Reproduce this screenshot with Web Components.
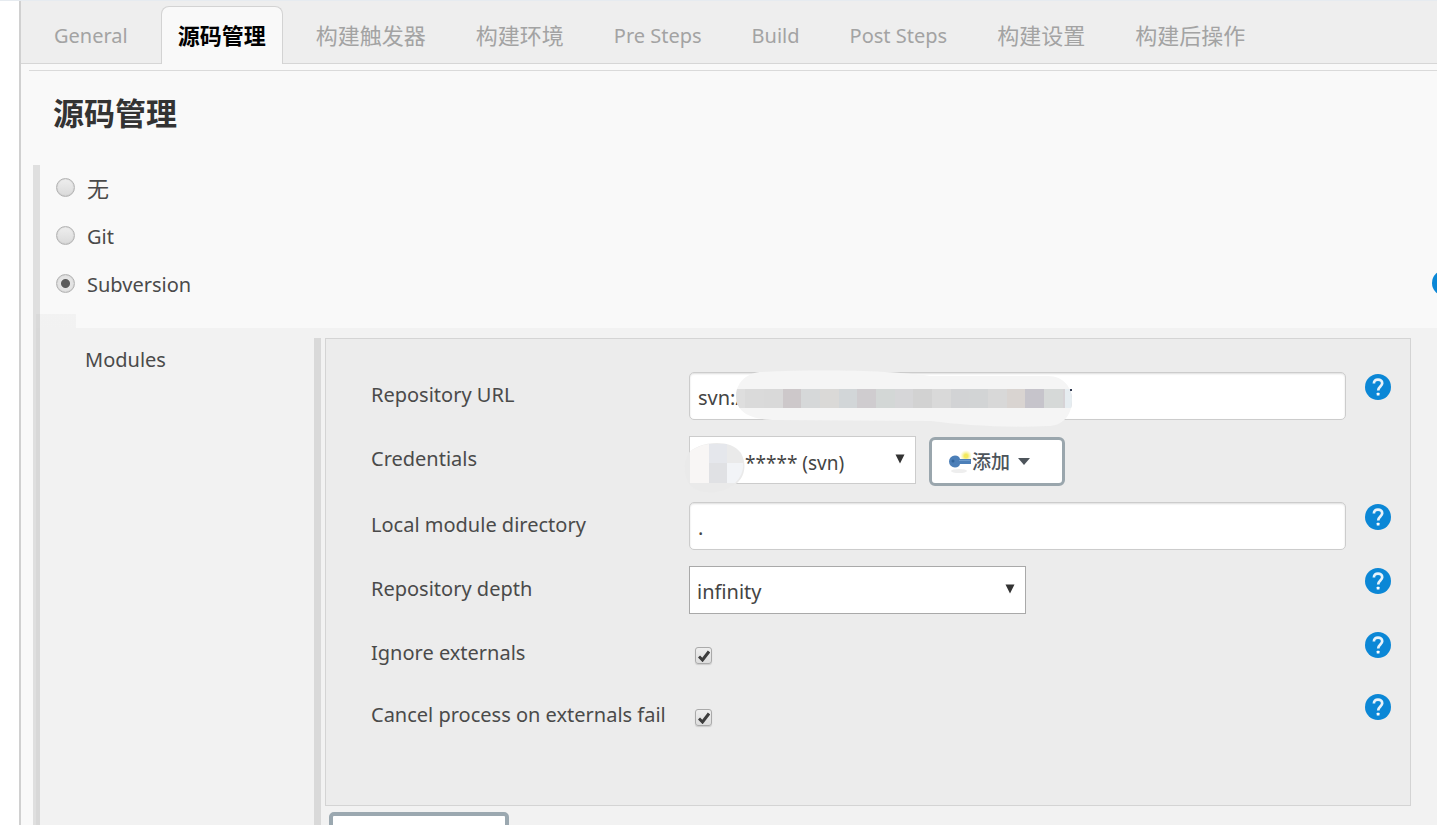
<!DOCTYPE html>
<html lang="zh-CN">
<head>
<meta charset="utf-8">
<title>源码管理</title>
<style>
  html, body { margin: 0; height: 100%; }
  body {
    overflow: hidden;
    background: #fff;
    color: #4a4a4a;
    font: 20px/28px "Noto Sans", "Noto Sans CJK SC", sans-serif;
  }
</style>
</head>
<body>
<config-page>
  <tab-strip slot="tabs"></tab-strip>
  <span slot="title">源码管理</span>
  <scm-options>
    <module-panel></module-panel>
  </scm-options>
</config-page>

<script>
class Base extends HTMLElement {
  constructor() {
    super();
    this.attachShadow({ mode: 'open' });
  }
  connectedCallback() {
    this.shadowRoot.innerHTML = '<style>*{box-sizing:border-box}</style>' + this.render();
  }
}

customElements.define('config-page', class extends Base {
  render() {
    return `<style>
      :host { display: block; height: 100vh; overflow: hidden; border-top: 1px solid #e6ebf0; }
      main { margin-left: 19px; border-left: 2px solid #d0d0d0; background: #f9f9f9; min-height: 100%; }
      hr { margin: 6px 0 0 8px; border: 0; border-top: 1px solid #dadada; }
      h2 { margin: 22px 0 32px 32px; font-size: 31px; line-height: 40px; font-weight: 700; color: #333; }
      .body { margin-left: 12px; }
    </style>
    <main>
      <slot name="tabs"></slot>
      <hr>
      <h2><slot name="title"></slot></h2>
      <div class="body"><slot></slot></div>
    </main>`;
  }
});

customElements.define('tab-strip', class extends Base {
  render() {
    const tabs = ['General', '源码管理', '构建触发器', '构建环境', 'Pre Steps', 'Build', 'Post Steps', '构建设置', '构建后操作'];
    const items = tabs.map((t, i) =>
      `<button role="tab" aria-selected="${i === 1}" class="${/^[A-Z]/.test(t) ? 'latin' : ''}">${t}</button>`).join('');
    return `<style>
      :host { display: block; }
      div { display: flex; gap: 18px; padding: 5px 17px 0; background: linear-gradient(#d6d6d6,#d6d6d6) bottom / 100% 1px no-repeat #eee; }
      button { flex: none; height: 58px; padding: 0 16px 2px; border: 1px solid transparent; border-bottom: 0; margin: 0 -1px;
        background: none; font: inherit; font-size: 22px; color: #a3a3a3; border-radius: 8px 8px 0 0; white-space: nowrap; }
      .latin { font-size: 20px; padding-bottom: 0; }
      [aria-selected=true] { background: #f9f9f9; border-color: #d3d3d3; color: #000; font-weight: 700; }
    </style><div role="tablist">${items}</div>`;
  }
});

customElements.define('help-icon', class extends Base {
  render() {
    return `<style>
      :host { display: block; width: 26px; height: 26px; flex: none; }
      button { display: block; width: 26px; height: 26px; padding: 0; border: 0; background: none; }
      svg { display: block; }
    </style>
    <button aria-label="Help"><svg width="26" height="26" viewBox="0 0 26 26">
      <circle cx="13" cy="13" r="13" fill="#0b87d6"/>
      <path d="M8.9 9.6C8.9 6.8 10.6 5.600 13 5.600s4.200 1.500 4.200 3.600c0 3.100-4 3.400-4 7.200" fill="none" stroke="#fff" stroke-opacity=".9" stroke-width="2.700"/>
      <rect x="11.700" y="18.700" width="2.800" height="2.800" rx=".6" fill="#fff"/>
    </svg></button>`;
  }
});

customElements.define('scm-options', class extends Base {
  render() {
    const row = (id, text, on, extra = '') => `<div class="row">
      <input type="radio" name="scm" id="${id}" ${on ? 'checked' : ''}><label for="${id}">${text}</label>${extra}</div>`;
    return `<style>
      :host { display: block; border-left: 7px solid #dfdfdf; }
      .row { display: flex; align-items: center; height: 48px; padding-left: 16px; margin-right: -21px; }
      input { appearance: none; flex: none; width: 19px; height: 19px; margin: 0 12px 4px 0; border: 1px solid #b4b4b4; border-radius: 50%;
        background: linear-gradient(#eee, #dadada); box-shadow: inset 0 0 1px #aaa; }
      input:checked { background: radial-gradient(circle, #5c5c5c 0 4px, #e4e4e4 5px); }
      label { flex: 1; }
      .wide { font-size: 22px; }
      help-icon { margin-bottom: 4px; }
      .nested { margin: 5px 0 0 -4px; --tint: rgba(0,0,0,.027); }
      .notch { height: 14px; background: linear-gradient(var(--tint), var(--tint)) left / 40px 100% no-repeat; }
      .content { background: var(--tint); }
    </style>
    ${row('none', '<span class="wide">无</span>')}
    ${row('git', 'Git')}
    ${row('svn', 'Subversion', true, '<help-icon></help-icon>')}
    <div class="nested"><div class="notch"></div><div class="content"><slot></slot></div></div>`;
  }
});

customElements.define('module-panel', class extends Base {
  render() {
    return `<style>
      :host { display: flex; padding: 10px 26px 0 49px; }
      h3 { flex: none; width: 229px; margin: 8px 0 0; font: inherit; }
      .list { flex: 1; min-width: 0; border-left: 7px solid #d9d9d9; padding: 0 0 40px 4px; }
      .box { display: grid; gap: 16px; border: 1px solid #d4d4d4; background: #ececec; padding: 33px 19px 67px 45px; }
      .add { display: block; width: 180px; height: 50px; margin: 6px 0 0 4px; border: 4px solid #9ba8b0; border-radius: 5px; background: #fff; }
    </style>
    <h3>Modules</h3>
    <div class="list">
      <div class="box">
        <field-row kind="url" label="Repository URL" help></field-row>
        <field-row kind="credentials" label="Credentials"></field-row>
        <field-row kind="directory" label="Local module directory" help></field-row>
        <field-row kind="depth" label="Repository depth" help></field-row>
        <field-row kind="check" label="Ignore externals" help></field-row>
        <field-row kind="check" label="Cancel process on externals fail" help></field-row>
      </div>
      <button class="add" aria-label="Add module"></button>
    </div>`;
  }
});

const arrow = '<svg class="arrow" width="10" height="10" viewBox="0 0 10 10"><path d="M.5 .5h9L5 9.5z" fill="#333"/></svg>';
const shades = ['#dedede', '#dadada', '#d9d9d9', '#cdc8ca', '#d6d8d9', '#dad9d7', '#d2d6d8', '#cfcccf', '#d3d7d6', '#d6d6d8', '#d2d2d2', '#d9d9d9', '#d2d3d5', '#d2d4d5', '#d8d8d8', '#d9d4d1', '#c6c4cb', '#d6d9d8', '#d6d3d6'];
const controls = {
  url: `<input id="c" type="text" value="svn:/">
    <svg class="mask" width="340" height="60" viewBox="0 0 340 60" aria-hidden="true">
      <defs><clipPath id="m"><path d="M26 2C90 -1 160 1 194 6L312 6C328 6 336 18 336 30C336 46 326 56 312 56C270 58 225 55 195 51L40 50C14 50 0 42 0 26C0 12 12 2 26 2z"/></clipPath></defs>
      <path d="M26 2C90 -1 160 1 194 6L312 6C328 6 336 18 336 30C336 46 326 56 312 56C270 58 225 55 195 51L40 50C14 50 0 42 0 26C0 12 12 2 26 2z" fill="#f5f5f5"/>
      <g clip-path="url(#m)">${shades.map((c, i) => `<rect x="${i * 18 - 9 + Math.floor(i * 2 / 3)}" y="19" width="19" height="19" fill="${c}"/>`).join('')}
        <rect x="329" y="19" width="9" height="19" fill="#e6edf1"/></g>
      <rect x="334" y="19" width="2" height="2" fill="#333b52"/>
    </svg>`,
  credentials: `<span class="select cred"><select id="c"><option>***** (svn)</option></select>${arrow}
      <svg class="blot" width="62" height="54" viewBox="0 0 62 54" aria-hidden="true">
        <path d="M4 14C12 2 46 -3 57 13C65 28 58 42 48 46C34 56 10 54 4 42C-1 32 0 22 4 14z" fill="#eaeaea"/>
        <path d="M6 11C12 8 17 5 25 4V43H6z" fill="#f8f6f5"/>
        <path d="M25 4h18v19H25z" fill="#e5e7ec"/><path d="M25 23h18v20H25z" fill="#e0e1e4"/><path d="M43 23h16C60 31 56 38 51 43h-8z" fill="#f2f4f7"/>
      </svg></span>
    <button class="key"><svg width="24" height="24" viewBox="0 0 24 24" aria-hidden="true">
      <defs><radialGradient id="g"><stop offset=".3" stop-color="#f2e95c"/><stop offset="1" stop-color="#f8f3a0" stop-opacity="0"/></radialGradient></defs>
      <ellipse cx="11" cy="21" rx="8" ry="2" fill="#eee"/>
      <circle cx="18" cy="6" r="6" fill="url(#g)"/>
      <path d="M7 5.500c3 0 4.500 1.500 5 3.500h11v5h-11c-.5 2-2 3.500-5 3.500a6 6 0 0 1 0-12z" fill="#4c7fb8"/>
      <path d="M11 10.500h11" stroke="#6c9acb"/><circle cx="5" cy="11" r="1.500" fill="#31659d"/>
    </svg><span>添加</span><svg class="caret" width="12" height="7" viewBox="0 0 12 7" aria-hidden="true"><path d="M0 0h12L6 7z" fill="#4d545b"/></svg></button>`,
  directory: `<input id="c" type="text" value=".">`,
  depth: `<span class="select depth"><select id="c"><option>infinity</option></select>${arrow}</span>`,
  check: `<input id="c" type="checkbox" checked><svg class="tick" width="12" height="12" viewBox="0 0 12 12" aria-hidden="true"><path d="M1 6.500L4.500 10L11 1.500" fill="none" stroke="#3d3d3d" stroke-width="3"/></svg>`
};

customElements.define('field-row', class extends Base {
  render() {
    const kind = this.getAttribute('kind');
    return `<style>
      :host { display: grid; grid-template-columns: 318px minmax(0, 1fr) 26px; min-height: 48px; align-items: start; }
      :host([kind=check]) { min-height: 46px; }
      label { line-height: 46px; white-space: nowrap; }
      .control { position: relative; display: flex; margin-right: 19px; }
      input[type=text] { width: 100%; height: 48px; padding: 2px 8px 0; border: 1px solid #ccc; border-radius: 5px;
        box-shadow: inset 0 1px 2px #ddd; background: #fff; font: inherit; color: #444; }
      .mask { position: absolute; left: 47px; top: -2px; }
      .select { position: relative; display: block; height: 48px; }
      select { appearance: none; display: block; width: 100%; height: 48px; padding: 3px 7px 0; border: 1px solid #ccc; border-radius: 0; background: #fff; font: inherit; color: #444; }
      .cred { width: 227px; }
      .cred select { padding: 6px 7px 0 55px; font-size: 19px; }
      .depth { width: 337px; }
      .depth select { border-color: #a9a9a9; }
      .arrow { position: absolute; right: 11px; top: 18px; }
      .blot { position: absolute; left: -5px; top: 4px; }
      .key { display: flex; align-items: center; width: 136px; height: 49px; margin: 1px 0 0 13px; padding: 0 0 0 16px;
        border: 3px solid #9aa6ad; border-radius: 6px; background: #fff; font: inherit; font-size: 19px; font-weight: 500; color: #4d545b; }
      .key svg { flex: none; }
      .key .caret { margin-left: 8px; }
      input[type=checkbox] { appearance: none; width: 17px; height: 17px; margin: 17px 0 0 6px; border: 1px solid #aaa; border-radius: 3px;
        background: linear-gradient(#eee, #ddd); box-shadow: 0 1px 1px #ccc; }
      .tick { position: absolute; left: 9px; top: 20px; }
      input:not(:checked) + .tick { display: none; }
      help-icon { margin-top: 2px; }
    </style>
    <label for="c">${this.getAttribute('label')}</label>
    <div class="control">${controls[kind]}</div>
    ${this.hasAttribute('help') ? '<help-icon></help-icon>' : ''}`;
  }
});
</script>
</body>
</html>
